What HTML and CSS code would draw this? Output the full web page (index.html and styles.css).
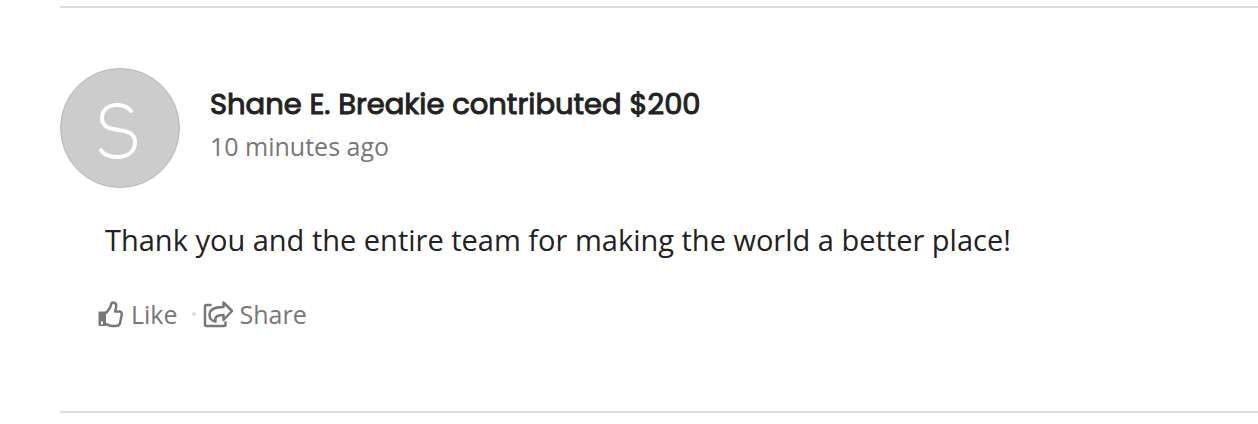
FILE: index.html
```html
<!DOCTYPE html>
<html lang="en">
<head>
    <meta charset="UTF-8">
    <meta name="viewport" content="width=device-width, initial-scale=1.0">
    <title>Contributions</title>
    <link rel="stylesheet" href="styles.css">
</head>
<body>
    <article class="activity">
        <header class="activity-header">
            <div class="avatar">
                <svg width="48" height="64" viewBox="0 0 48 64" aria-hidden="true">
                    <path d="M35 15C29 6 6 6 6 22C6 41 39 27 39 46C39 65 10 64 5 54" />
                </svg>
            </div>
            <div class="summary">
                <h2>Shane E. Breakie contributed $200</h2>
                <div class="time">10 minutes ago</div>
            </div>
        </header>

        <p class="message">Thank you and the entire team for making the world a better place!</p>

        <div class="actions">
            <button type="button">
                <svg width="26" height="28" viewBox="0 0 26 28" aria-hidden="true">
                    <path class="cuff" fill-rule="evenodd" d="M1 11.5H8V26H2Q0.5 26 0.5 24.5V12Q0.5 11.5 1 11.5ZM3 21.5V24.5H5V21.5Z" />
                    <path d="M7.5 13C10 12 10.5 9.5 12 7.5C13.5 5.5 12.5 2.5 15 2.5C18.5 2.5 18.5 6 18 8L17 11.5H22C24 12 24 14 23.5 16L22 23C21.5 25 20 26 18 26H14C11 26 9.5 24 7.5 24" />
                </svg>
                Like
            </button>
            <span class="dot"></span>
            <button type="button">
                <svg width="30" height="28" viewBox="0 0 30 28" aria-hidden="true">
                    <path d="M7.5 5H3.5Q2 5 2 6.5V24.5Q2 26 3.5 26H21Q22.5 26 22.5 24.5V22.5" />
                    <path d="M20.5 2.5L29 11L20.5 20V15C14 15 11.5 17 12.5 21.5C8.5 21 6.5 18 6.5 15C6.500 9 12 7 20.500 7Z" />
                </svg>
                Share
            </button>
        </div>
    </article>
</body>
</html>
```

FILE: styles.css
```css
body {
    margin: 6px 0 0 60px;
    background: #fff;
    color: #222;
    font-family: "Open Sans", sans-serif;
}
.activity {
    padding: 60px 0 76px;
    border-top: 2px solid #ddd;
    border-bottom: 2px solid #ddd;
}
.activity-header {
    display: flex;
    align-items: center;
    gap: 30px;
}
.avatar {
    display: flex;
    align-items: center;
    justify-content: center;
    box-sizing: border-box;
    width: 120px;
    height: 120px;
    border: 1px solid #b8b8b8;
    border-radius: 50%;
    background: #ccc;
}
svg {
    fill: none;
    stroke: #777;
    stroke-width: 2.5;
    stroke-linecap: round;
    stroke-linejoin: round;
}
.avatar svg {
    stroke: #fff;
    stroke-width: 4;
}
.summary {
    padding-bottom: 8px;
}
h2 {
    margin: 0;
    font-family: Poppins, Inter, sans-serif;
    font-size: 29px;
    font-weight: 400;
    line-height: 44px;
    -webkit-text-stroke: 1px #222;
}
.time {
    color: #777;
    font-size: 25px;
    line-height: 40px;
}
.message {
    margin: 32px 0 34px 45px;
    font-size: 29px;
    line-height: 40px;
}
.actions {
    display: flex;
    align-items: center;
    margin-left: 38px;
    padding-bottom: 1px;
}
button {
    display: flex;
    align-items: center;
    gap: 7px;
    padding: 0;
    border: none;
    background: none;
    color: #777;
    font-family: inherit;
    font-size: 25px;
    line-height: 40px;
    cursor: pointer;
}
.cuff {
    fill: #777;
    stroke: none;
}
.dot {
    width: 4px;
    height: 4px;
    margin: 0 7px 0 14px;
    border-radius: 50%;
    background: #ddd;
}
```
